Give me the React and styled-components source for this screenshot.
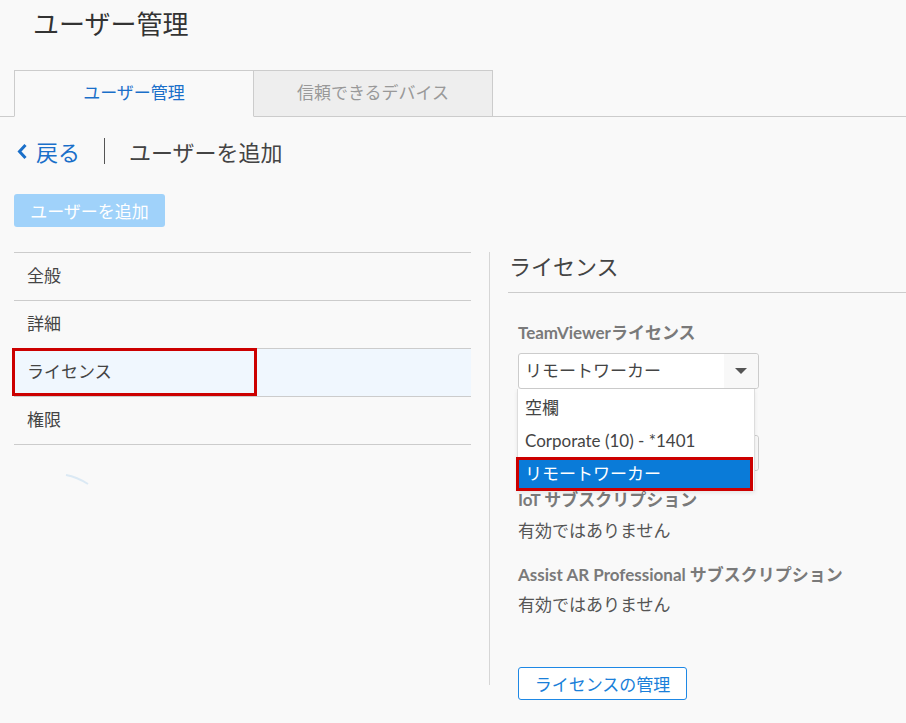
import styled, { createGlobalStyle } from 'styled-components'

const GlobalStyle = createGlobalStyle`
  * {
    box-sizing: border-box;
  }
  body {
    margin: 0;
    background: #f9f9f9;
    font-family: Lato, "Noto Sans CJK JP", sans-serif;
    font-size: 17px;
    color: #444;
  }
`

const Page = styled.div`
  width: 906px;
  min-height: 723px;
  overflow: hidden;
`

const Title = styled.h1`
  margin: 0;
  padding: 8px 33px;
  font-size: 26px;
  font-weight: 400;
  line-height: 32px;
  color: #333;
`

const TabBar = styled.div`
  display: flex;
  margin-top: 22px;
  padding-left: 14px;
  height: 47px;
  border-bottom: 1px solid #ccc;
`

const Tab = styled.div`
  width: ${(p) => (p.$active ? '240px' : '239px')};
  height: 47px;
  margin-bottom: -1px;
  border: 1px solid #ccc;
  border-left-width: ${(p) => (p.$active ? '1px' : '0')};
  border-bottom-color: ${(p) => (p.$active ? '#f9f9f9' : '#ccc')};
  background: ${(p) => (p.$active ? '#f9f9f9' : '#eeeeee')};
  color: ${(p) => (p.$active ? '#1a6fc9' : '#999')};
  font-size: 17px;
  line-height: 44px;
  text-align: center;
`

const Body = styled.div`
  padding-left: 14px;
`

const BackRow = styled.div`
  display: flex;
  align-items: center;
  height: 36px;
  margin-top: 16px;
`

const BackLink = styled.a`
  display: flex;
  align-items: center;
  gap: 8px;
  color: #1a6fc9;
  font-size: 22px;
  text-decoration: none;
  cursor: pointer;

  svg {
    margin-left: 2px;
  }
`

const Separator = styled.span`
  width: 1px;
  height: 26px;
  margin: 0 24px;
  background: #555;
`

const Subtitle = styled.span`
  font-size: 22px;
  color: #444;
`

const AddButton = styled.button`
  display: block;
  margin-top: 25px;
  width: 151px;
  height: 33px;
  padding: 0;
  border: none;
  border-radius: 3px;
  background: #a0d2fa;
  color: #fff;
  font-family: inherit;
  font-size: 17px;
`

const Columns = styled.div`
  display: flex;
  align-items: flex-start;
  margin-top: 25px;
`

const LeftCol = styled.div`
  width: 457px;
  flex-shrink: 0;
`

const NavList = styled.ul`
  list-style: none;
  margin: 0;
  padding: 0;
  border-bottom: 1px solid #ccc;
`

const NavItem = styled.li`
  position: relative;
  height: 48px;
  padding-left: 13px;
  border-top: 1px solid #ccc;
  background: ${(p) => (p.$selected ? '#f0f7fe' : 'transparent')};
  color: #444;
  line-height: 46px;
`

const Highlight = styled.span`
  position: absolute;
  left: -2px;
  top: -1px;
  width: 245px;
  height: 48px;
  border: 3px solid #cc0000;
`

const Smudge = styled.svg`
  display: block;
  margin: 29px 0 0 51px;
`

const Divider = styled.div`
  width: 1px;
  height: 433px;
  margin-left: 18px;
  flex-shrink: 0;
  background: #d6d6d6;
`

const RightCol = styled.div`
  flex: 1;
`

const SectionHeading = styled.h2`
  margin: 0 0 0 18px;
  padding: 0 0 10px 1px;
  border-bottom: 1px solid #ccc;
  font-size: 22px;
  font-weight: 400;
  line-height: 30px;
  color: #444;
`

const Form = styled.div`
  padding-left: 28px;
`

const Label = styled.div`
  margin-top: ${(p) => p.$top || 0}px;
  font-weight: 700;
  line-height: 22px;
  color: #7a7a7a;
`

const Value = styled.div`
  margin-top: ${(p) => p.$top || 0}px;
  line-height: 22px;
  color: #555;
`

const SelectWrap = styled.div`
  position: relative;
  width: 241px;
  margin-top: ${(p) => p.$top || 0}px;
  z-index: ${(p) => (p.$open ? 2 : 1)};
`

const SelectBox = styled.div`
  display: flex;
  height: 36px;
  border: 1px solid #ccc;
  border-radius: 3px;
  background: #fff;
`

const SelectText = styled.span`
  flex: 1;
  padding-left: 6px;
  line-height: 34px;
  color: #444;
`

const Arrow = styled.span`
  display: flex;
  align-items: center;
  justify-content: center;
  width: 34px;
  background: #f8f8f8;
  border-radius: 0 3px 3px 0;

  &::after {
    content: '';
    border-left: 6px solid transparent;
    border-right: 6px solid transparent;
    border-top: 6px solid #555;
  }
`

const Dropdown = styled.ul`
  position: absolute;
  left: -1px;
  top: 100%;
  width: 238px;
  margin: 0;
  padding: 2px 0 0;
  list-style: none;
  background: #fff;
  border: 1px solid #ddd;
  border-top: none;
  box-shadow: 0 2px 4px rgba(0, 0, 0, 0.08);
`

const Option = styled.li`
  height: ${(p) => (p.$active ? '34px' : '33px')};
  margin: ${(p) => (p.$active ? '0 1px -1px -2px' : '0')};
  padding-left: ${(p) => (p.$active ? '6px' : '7px')};
  border: ${(p) => (p.$active ? '3px solid #cc0000' : 'none')};
  background: ${(p) => (p.$active ? '#0a7bd8' : 'transparent')};
  color: ${(p) => (p.$active ? '#fff' : '#444')};
  line-height: ${(p) => (p.$active ? '28px' : '33px')};
`

const OutlineButton = styled.button`
  display: block;
  margin-top: 51px;
  width: 169px;
  height: 33px;
  padding: 0;
  border: 1px solid #1e88e5;
  border-radius: 3px;
  background: #fff;
  color: #1a7fd9;
  font-family: inherit;
  font-size: 17px;
`

const navItems = ['全般', '詳細', 'ライセンス', '権限']

export default function App() {
  return (
    <Page>
      <GlobalStyle />
      <Title>ユーザー管理</Title>
      <TabBar>
        <Tab $active>ユーザー管理</Tab>
        <Tab>信頼できるデバイス</Tab>
      </TabBar>
      <Body>
        <BackRow>
          <BackLink>
            <svg width="12" height="17" viewBox="0 0 12 17">
              <path d="M9.5 2 L3.5 8.5 L9.5 15" fill="none" stroke="#1a6fc9" strokeWidth="3" />
            </svg>
            戻る
          </BackLink>
          <Separator />
          <Subtitle>ユーザーを追加</Subtitle>
        </BackRow>
        <AddButton>ユーザーを追加</AddButton>
        <Columns>
          <LeftCol>
            <NavList>
              {navItems.map((item) => (
                <NavItem key={item} $selected={item === 'ライセンス'}>
                  {item}
                  {item === 'ライセンス' && <Highlight />}
                </NavItem>
              ))}
            </NavList>
            <Smudge width="24" height="11" viewBox="0 0 24 11">
              <path d="M1 1 Q12 3 23 10" fill="none" stroke="#dbe9f4" strokeWidth="2" />
            </Smudge>
          </LeftCol>
          <Divider />
          <RightCol>
            <SectionHeading>ライセンス</SectionHeading>
            <Form>
              <Label $top={29}>TeamViewerライセンス</Label>
              <SelectWrap $top={9} $open>
                <SelectBox>
                  <SelectText>リモートワーカー</SelectText>
                  <Arrow />
                </SelectBox>
                <Dropdown>
                  <Option>空欄</Option>
                  <Option>Corporate (10) - *1401</Option>
                  <Option $active>リモートワーカー</Option>
                </Dropdown>
              </SelectWrap>
              {/* second select sits under the open list, only its edge shows */}
              <SelectWrap $top={46}>
                <SelectBox>
                  <SelectText />
                  <Arrow />
                </SelectBox>
              </SelectWrap>
              <Label $top={18}>IoT サブスクリプション</Label>
              <Value $top={9}>有効ではありません</Value>
              <Label $top={22}>Assist AR Professional サブスクリプション</Label>
              <Value $top={8}>有効ではありません</Value>
              <OutlineButton>ライセンスの管理</OutlineButton>
            </Form>
          </RightCol>
        </Columns>
      </Body>
    </Page>
  )
}
